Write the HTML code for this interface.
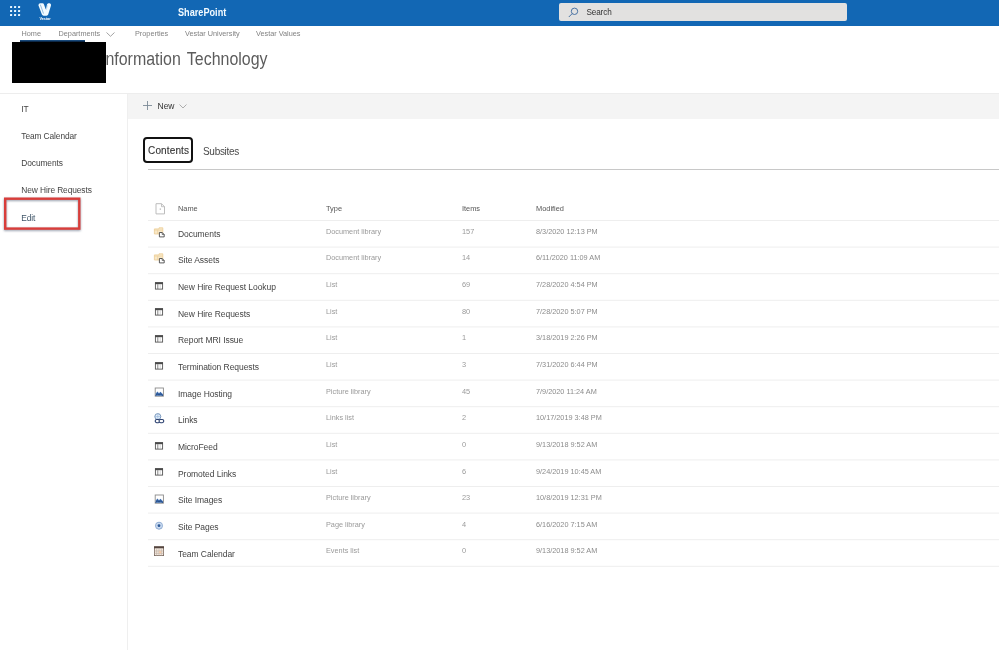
<!DOCTYPE html>
<html><head><meta charset="utf-8"><title>Site contents</title>
<style>
*{box-sizing:border-box;margin:0;padding:0}
html,body{width:999px;height:650px;overflow:hidden;background:#fff;font-family:"Liberation Sans",sans-serif;color:#333}
.abs{position:absolute}
span{white-space:nowrap;line-height:1.15}
#top{position:absolute;left:0;top:0;width:999px;height:26px;background:#1267b4}
#sp{position:absolute;left:178.300px;top:6.500px;font-size:10px;font-weight:bold;color:#f4fbff;transform:scaleX(.915);transform-origin:0 0}
#search{position:absolute;left:559px;top:3px;width:288px;height:18px;background:#e2e1e0;border-radius:2px}
#search span{position:absolute;left:27.500px;top:5px;font-size:8.200px;color:#333;letter-spacing:-.15px}
#nav span{position:absolute;top:29.700px;font-size:7.300px;color:#828282}
#black{position:absolute;left:12px;top:42px;width:94px;height:41px;background:#000}
#uline{position:absolute;left:20px;top:40px;width:65px;height:2px;background:linear-gradient(#1f5a94,#06182e)}
#title{position:absolute;left:100.570px;top:49.100px;font-size:17.600px;color:#5c5c5c;word-spacing:2.100px;transform:scaleX(.9065);transform-origin:0 0}
#hline{position:absolute;left:0;top:93px;width:999px;height:1px;background:#ededed}
#toolbar{position:absolute;left:128px;top:94px;width:871px;height:24.500px;background:#f4f4f4}
#side{position:absolute;left:127px;top:94px;width:1px;height:556px;background:#efefef}
#new{position:absolute;left:157.500px;top:102.300px;font-size:8.500px;color:#333}
.sn{position:absolute;left:21.300px;font-size:8.400px;color:#444;letter-spacing:-.1px}
#red{position:absolute;left:4px;top:198px;width:76.500px;height:32px;border:2.300px solid #d93a38;filter:drop-shadow(.8px 1.500px 1.200px rgba(70,85,110,.6))}
#tab1{position:absolute;left:143px;top:137px;width:50px;height:26px;border:2px solid #111;border-radius:4px}
#tab1 span{position:absolute;left:3.100px;top:6.100px;font-size:10px;color:#333;letter-spacing:.12px;-webkit-text-stroke:.12px #333}
#tab2{position:absolute;left:203px;top:145.700px;font-size:10px;color:#4a4a4a;letter-spacing:-.3px}
#tline{position:absolute;left:148px;top:169px;width:851px;height:1px;background:#c8c8c8}
.hd{position:absolute;top:205.200px;font-size:7.400px;color:#555}
.ic{position:absolute;left:152px}
.nm,.ty,.it,.md{position:absolute}
.nm{left:178px;font-size:8.500px;color:#444;letter-spacing:-.06px}
.ty{left:326px;font-size:7.300px;color:#9a9a9a}
.it{left:462px;font-size:7.400px;color:#9a9a9a}
.md{left:536px;font-size:7.300px;color:#8c8c8c}
.sep{position:absolute;left:148px;width:851px;height:1px;background:#f1f1f1}
#wrap{position:absolute;left:0;top:0;width:999px;height:650px;will-change:transform;transform:translateZ(0)}
</style></head><body><div id="wrap">
<div id="top">
<svg class="abs" style="left:9.800px;top:6px" width="11" height="11" viewBox="0 0 11 11" fill="#e8f6ff"><rect x="0" y="0" width="2.100" height="2.100" rx=".5"/><rect x="4" y="0" width="2.100" height="2.100" rx=".5"/><rect x="8" y="0" width="2.100" height="2.100" rx=".5"/><rect x="0" y="4" width="2.100" height="2.100" rx=".5"/><rect x="4" y="4" width="2.100" height="2.100" rx=".5"/><rect x="8" y="4" width="2.100" height="2.100" rx=".5"/><rect x="0" y="8" width="2.100" height="2.100" rx=".5"/><rect x="4" y="8" width="2.100" height="2.100" rx=".5"/><rect x="8" y="8" width="2.100" height="2.100" rx=".5"/></svg>
<svg class="abs" style="left:30px;top:0" width="30" height="20" viewBox="30 0 30 20"><path d="M38.400 5.300Q38.500 3.400 40.400 3.300L42.600 3.300Q43.600 3.400 44 4.400L45.800 9.600 47 4.600Q47.400 3.400 48.400 3.300L49.600 3.300Q51.400 3.500 51 5.400L48.200 14.600Q47.800 15.700 46.600 15.700L43.600 15.700Q42.400 15.700 41.900 14.600Z" fill="#f2fbff"/><path d="M40.300 4.600L43.500 13.600" stroke="#1267b4" stroke-width=".6" opacity=".7"/><path d="M47.600 5.200L46.300 9.800" stroke="#1267b4" stroke-width=".4" opacity=".5"/></svg>
<span class="abs" style="left:39.500px;top:17.300px;font-size:3.800px;color:#fff;font-weight:bold;letter-spacing:-.05px">Vestar</span>
<span id="sp">SharePoint</span>
<div id="search"><svg class="abs" style="left:9px;top:4px" width="11" height="11" viewBox="0 0 11 11"><circle cx="6.500" cy="4.300" r="3.200" fill="none" stroke="#3a679c" stroke-width=".9"/><path d="M4.200 6.600L0.800 10" stroke="#3a679c" stroke-width=".9"/></svg><span>Search</span></div>
</div>
<div id="nav">
<span style="left:21.500px">Home</span><span style="left:58.500px">Departments</span>
<svg class="abs" style="left:106px;top:32px" width="9" height="5" viewBox="0 0 9 5"><path d="M0.500 0.500L4.500 4.300 8.500 0.500" fill="none" stroke="#999" stroke-width=".9"/></svg>
<span style="left:135px">Properties</span><span style="left:185px">Vestar University</span><span style="left:256px">Vestar Values</span>
</div>
<div id="title">Information Technology</div>
<div id="uline"></div>
<div id="black"></div>
<div id="hline"></div>
<div id="toolbar"></div>
<div id="side"></div>
<svg class="abs" style="left:142.700px;top:101.300px" width="9" height="9" viewBox="0 0 9 9"><path d="M4.500 0v9M0 4.500h9" stroke="#7d8b97" stroke-width=".9"/></svg>
<span id="new">New</span>
<svg class="abs" style="left:179px;top:104px" width="8" height="5" viewBox="0 0 8 5"><path d="M0.500 0.500L4 4 7.500 0.500" fill="none" stroke="#a5a5a5" stroke-width=".9"/></svg>
<span class="sn" style="top:104.500px">IT</span>
<span class="sn" style="top:131.700px">Team Calendar</span>
<span class="sn" style="top:158.600px">Documents</span>
<span class="sn" style="top:185.600px">New Hire Requests</span>
<span class="sn" style="top:213.800px;color:#3f5568">Edit</span>
<svg class="abs" style="left:0;top:190px;filter:drop-shadow(.8px 1.500px 1.200px rgba(70,85,110,.6))" width="90" height="48" viewBox="0 0 90 48"><rect x="5.200" y="8.700" width="74.100" height="29.900" fill="none" stroke="#d93d3a" stroke-width="2.400"/></svg>
<div id="tab1"><span>Contents</span></div>
<span id="tab2">Subsites</span>
<div id="tline"></div>
<svg class="abs" style="left:155px;top:203px" width="11" height="12" viewBox="0 0 11 12"><path d="M1 .7h5.500l3 3v7.200h-8.500z" fill="#fff" stroke="#b5b5b5" stroke-width=".9"/><path d="M6.500 .7v3h3" fill="none" stroke="#b5b5b5" stroke-width=".8"/><rect x="4.700" y="5.500" width="1.200" height="1.200" fill="#aaa"/></svg>
<span class="hd" style="left:178px">Name</span><span class="hd" style="left:326px">Type</span><span class="hd" style="left:462px">Items</span><span class="hd" style="left:536px">Modified</span>
<svg class="ic" style="top:226.5px" width="14" height="14" viewBox="0 0 14 14"><path d="M2.400 1.900h4.600v-1.100h3.800v6.200h-8.400z" fill="#f8e8c8" stroke="#eccd94" stroke-width=".8"/><path d="M2.400 3.100h8.400M5.600 3.100v3.900" stroke="#eccd94" stroke-width=".6"/><path d="M7.400 5.500h2.800l2 2v2.400h-4.800z" fill="#fff" stroke="#4a4a4a" stroke-width=".9"/><path d="M10.200 5.500v2h2" fill="none" stroke="#4a4a4a" stroke-width=".7"/></svg>
<span class="nm" style="top:229.8px">Documents</span><span class="ty" style="top:227.7px">Document library</span><span class="it" style="top:227.7px">157</span><span class="md" style="top:227.7px">8/3/2020 12:13 PM</span>
<svg class="ic" style="top:253.1px" width="14" height="14" viewBox="0 0 14 14"><path d="M2.400 1.900h4.600v-1.100h3.800v6.200h-8.400z" fill="#f8e8c8" stroke="#eccd94" stroke-width=".8"/><path d="M2.400 3.100h8.400M5.600 3.100v3.900" stroke="#eccd94" stroke-width=".6"/><path d="M7.400 5.500h2.800l2 2v2.400h-4.800z" fill="#fff" stroke="#4a4a4a" stroke-width=".9"/><path d="M10.200 5.500v2h2" fill="none" stroke="#4a4a4a" stroke-width=".7"/></svg>
<span class="nm" style="top:256.4px">Site Assets</span><span class="ty" style="top:254.3px">Document library</span><span class="it" style="top:254.3px">14</span><span class="md" style="top:254.3px">6/11/2020 11:09 AM</span>
<svg class="ic" style="top:279.8px" width="14" height="14" viewBox="0 0 14 14"><rect x="3.400" y="2.700" width="7.200" height="6.400" fill="#fff" stroke="#555" stroke-width=".9"/><rect x="3" y="2.300" width="8" height="1.900" fill="#4a4a4a"/><path d="M5.800 4.200v4.800" stroke="#666" stroke-width=".8"/><path d="M8.200 4.200v4.800" stroke="#bbb" stroke-width=".6"/></svg>
<span class="nm" style="top:283.1px">New Hire Request Lookup</span><span class="ty" style="top:281.0px">List</span><span class="it" style="top:281.0px">69</span><span class="md" style="top:281.0px">7/28/2020 4:54 PM</span>
<svg class="ic" style="top:306.4px" width="14" height="14" viewBox="0 0 14 14"><rect x="3.400" y="2.700" width="7.200" height="6.400" fill="#fff" stroke="#555" stroke-width=".9"/><rect x="3" y="2.300" width="8" height="1.900" fill="#4a4a4a"/><path d="M5.800 4.200v4.800" stroke="#666" stroke-width=".8"/><path d="M8.200 4.200v4.800" stroke="#bbb" stroke-width=".6"/></svg>
<span class="nm" style="top:309.7px">New Hire Requests</span><span class="ty" style="top:307.6px">List</span><span class="it" style="top:307.6px">80</span><span class="md" style="top:307.6px">7/28/2020 5:07 PM</span>
<svg class="ic" style="top:333.1px" width="14" height="14" viewBox="0 0 14 14"><rect x="3.400" y="2.700" width="7.200" height="6.400" fill="#fff" stroke="#555" stroke-width=".9"/><rect x="3" y="2.300" width="8" height="1.900" fill="#4a4a4a"/><path d="M5.800 4.200v4.800" stroke="#666" stroke-width=".8"/><path d="M8.200 4.200v4.800" stroke="#bbb" stroke-width=".6"/></svg>
<span class="nm" style="top:336.4px">Report MRI Issue</span><span class="ty" style="top:334.3px">List</span><span class="it" style="top:334.3px">1</span><span class="md" style="top:334.3px">3/18/2019 2:26 PM</span>
<svg class="ic" style="top:359.7px" width="14" height="14" viewBox="0 0 14 14"><rect x="3.400" y="2.700" width="7.200" height="6.400" fill="#fff" stroke="#555" stroke-width=".9"/><rect x="3" y="2.300" width="8" height="1.900" fill="#4a4a4a"/><path d="M5.800 4.200v4.800" stroke="#666" stroke-width=".8"/><path d="M8.200 4.200v4.800" stroke="#bbb" stroke-width=".6"/></svg>
<span class="nm" style="top:363.0px">Termination Requests</span><span class="ty" style="top:360.9px">List</span><span class="it" style="top:360.9px">3</span><span class="md" style="top:360.9px">7/31/2020 6:44 PM</span>
<svg class="ic" style="top:386.3px" width="14" height="14" viewBox="0 0 14 14"><rect x="3.200" y="2" width="8.200" height="8.200" fill="#fff" stroke="#8a8a8a" stroke-width=".9"/><path d="M3.600 9.800v-2l1.800-2.300 1.600 1.800 1.400-1.500 2.600 2.500v1.500z" fill="#3d6db0"/><path d="M3.600 9.800l1.800-2 1.600 1.200 1.400-1 2.600 1.800" fill="none" stroke="#1f3f73" stroke-width=".7"/></svg>
<span class="nm" style="top:389.6px">Image Hosting</span><span class="ty" style="top:387.5px">Picture library</span><span class="it" style="top:387.5px">45</span><span class="md" style="top:387.5px">7/9/2020 11:24 AM</span>
<svg class="ic" style="top:413.0px" width="14" height="14" viewBox="0 0 14 14"><circle cx="5.800" cy="3.600" r="3" fill="#e3eef9" stroke="#6f8fb5" stroke-width=".9"/><path d="M2.800 3.600h6M5.800 .6v6" stroke="#8fb0d6" stroke-width=".6"/><rect x="3.200" y="6.500" width="4.800" height="3.200" rx="1.600" fill="#fff" stroke="#2a3f6e" stroke-width="1.100"/><rect x="7" y="6.500" width="4.800" height="3.200" rx="1.600" fill="#fff" stroke="#2a3f6e" stroke-width="1.100"/></svg>
<span class="nm" style="top:416.3px">Links</span><span class="ty" style="top:414.2px">Links list</span><span class="it" style="top:414.2px">2</span><span class="md" style="top:414.2px">10/17/2019 3:48 PM</span>
<svg class="ic" style="top:439.6px" width="14" height="14" viewBox="0 0 14 14"><rect x="3.400" y="2.700" width="7.200" height="6.400" fill="#fff" stroke="#555" stroke-width=".9"/><rect x="3" y="2.300" width="8" height="1.900" fill="#4a4a4a"/><path d="M5.800 4.200v4.800" stroke="#666" stroke-width=".8"/><path d="M8.200 4.200v4.800" stroke="#bbb" stroke-width=".6"/></svg>
<span class="nm" style="top:442.9px">MicroFeed</span><span class="ty" style="top:440.8px">List</span><span class="it" style="top:440.8px">0</span><span class="md" style="top:440.8px">9/13/2018 9:52 AM</span>
<svg class="ic" style="top:466.3px" width="14" height="14" viewBox="0 0 14 14"><rect x="3.400" y="2.700" width="7.200" height="6.400" fill="#fff" stroke="#555" stroke-width=".9"/><rect x="3" y="2.300" width="8" height="1.900" fill="#4a4a4a"/><path d="M5.800 4.200v4.800" stroke="#666" stroke-width=".8"/><path d="M8.200 4.200v4.800" stroke="#bbb" stroke-width=".6"/></svg>
<span class="nm" style="top:469.6px">Promoted Links</span><span class="ty" style="top:467.5px">List</span><span class="it" style="top:467.5px">6</span><span class="md" style="top:467.5px">9/24/2019 10:45 AM</span>
<svg class="ic" style="top:492.9px" width="14" height="14" viewBox="0 0 14 14"><rect x="3.200" y="2" width="8.200" height="8.200" fill="#fff" stroke="#8a8a8a" stroke-width=".9"/><path d="M3.600 9.800v-2l1.800-2.300 1.600 1.800 1.400-1.500 2.600 2.500v1.500z" fill="#3d6db0"/><path d="M3.600 9.800l1.800-2 1.600 1.200 1.400-1 2.600 1.800" fill="none" stroke="#1f3f73" stroke-width=".7"/></svg>
<span class="nm" style="top:496.2px">Site Images</span><span class="ty" style="top:494.1px">Picture library</span><span class="it" style="top:494.1px">23</span><span class="md" style="top:494.1px">10/8/2019 12:31 PM</span>
<svg class="ic" style="top:519.5px" width="14" height="14" viewBox="0 0 14 14"><circle cx="7" cy="5.700" r="3.500" fill="#dfeaf8" stroke="#7f9fc9" stroke-width=".9"/><path d="M7 2.200v7M3.500 5.700h7M4.500 3.200l5 5M9.500 3.200L4.500 8.200" stroke="#9fbbe0" stroke-width=".6"/><circle cx="7" cy="5.700" r="1.400" fill="#2d5a96"/></svg>
<span class="nm" style="top:522.8px">Site Pages</span><span class="ty" style="top:520.7px">Page library</span><span class="it" style="top:520.7px">4</span><span class="md" style="top:520.7px">6/16/2020 7:15 AM</span>
<svg class="ic" style="top:546.2px" width="14" height="14" viewBox="0 0 14 14"><rect x="2.400" y="0.800" width="9.200" height="8.800" fill="#f5ebe2" stroke="#75645b" stroke-width=".8"/><rect x="2" y="0.400" width="10" height="1.900" fill="#54453f"/><path d="M4.700 2.600v7M7 2.600v7M9.300 2.600v7M2.400 5h9.200M2.400 7.300h9.200" stroke="#b9a89c" stroke-width=".6"/><rect x="7.200" y="5.200" width="2" height="2" fill="#f6c9a6"/></svg>
<span class="nm" style="top:549.5px">Team Calendar</span><span class="ty" style="top:547.4px">Events list</span><span class="it" style="top:547.4px">0</span><span class="md" style="top:547.4px">9/13/2018 9:52 AM</span>
<svg class="abs" style="left:148px;top:0" width="851" height="600" viewBox="0 0 851 600" fill="#eeeeee"><rect x="0" y="220" width="851" height="1"/><rect x="0" y="246.60" width="851" height="1"/><rect x="0" y="273.20" width="851" height="1"/><rect x="0" y="299.80" width="851" height="1"/><rect x="0" y="326.40" width="851" height="1"/><rect x="0" y="353.00" width="851" height="1"/><rect x="0" y="379.60" width="851" height="1"/><rect x="0" y="406.20" width="851" height="1"/><rect x="0" y="432.80" width="851" height="1"/><rect x="0" y="459.40" width="851" height="1"/><rect x="0" y="486.00" width="851" height="1"/><rect x="0" y="512.60" width="851" height="1"/><rect x="0" y="539.20" width="851" height="1"/><rect x="0" y="565.80" width="851" height="1"/></svg>
</div></body></html>
